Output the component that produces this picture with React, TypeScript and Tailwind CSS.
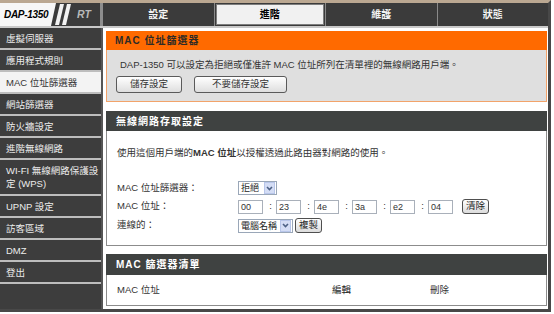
import React from 'react';

type MenuItem = { label: string | string[]; active?: boolean };

const menu: MenuItem[] = [
  { label: '虛擬伺服器' },
  { label: '應用程式規則' },
  { label: 'MAC 位址篩選器', active: true },
  { label: '網站篩選器' },
  { label: '防火牆設定' },
  { label: '進階無線網路' },
  { label: ['WI-FI 無線網路保護設', '定 (WPS)'] },
  { label: 'UPNP 設定' },
  { label: '訪客區域' },
  { label: 'DMZ' },
  { label: '登出' },
];

const tabs = [
  { label: '設定' },
  { label: '進階', active: true },
  { label: '維護' },
  { label: '狀態' },
];

const macParts = ['00', '23', '4e', '3a', 'e2', '04'];

const Chevron = () => (
  <svg width="7" height="5" viewBox="0 0 7 5">
    <path d="M1 1 L3.5 3.5 L6 1" fill="none" stroke="#4d6185" strokeWidth="1.6" />
  </svg>
);

const Select: React.FC<{ value: string; wide?: boolean }> = ({ value, wide }) => (
  <div className={`flex items-center h-[14px] border border-[#9aa7b8] bg-white ${wide ? 'w-[55px]' : 'w-[39px]'}`}>
    <span className="flex-1 pl-[2px] text-[9px] leading-[12px] text-[#222] whitespace-nowrap overflow-hidden">{value}</span>
    <span className="flex items-center justify-center shrink-0 w-[11px] h-[12px] mr-[1px] bg-[#d4ddf5] border border-[#b8c6ea]">
      <Chevron />
    </span>
  </div>
);

const SmallButton: React.FC<{ label: string }> = ({ label }) => (
  <div className="flex items-center justify-center h-[15px] px-[3px] border border-[#4f4f4f] rounded-[3px] bg-linear-to-b from-white to-[#dcdcdc] text-[9.5px] text-[#222] whitespace-nowrap">
    {label}
  </div>
);

const BigButton: React.FC<{ label: string; wide?: boolean }> = ({ label, wide }) => (
  <div
    className={`flex items-center justify-center h-[17px] border border-[#5a5a5a] rounded-[3px] bg-linear-to-b from-white to-[#dedede] text-[9.5px] text-[#333] ${wide ? 'w-[93px]' : 'w-[66px]'}`}
  >
    {label}
  </div>
);

export default function App() {
  return (
    <div className="w-[554px] h-[314px] bg-white overflow-hidden [font-family:'Liberation_Sans','Noto_Sans_CJK_TC',sans-serif]">
      <div className="w-[551px] h-[312px] flex flex-col border-t-[3px] border-t-[#bba892] border-r-[3px] border-r-[#484848] border-b-[3px] border-b-[#484848]">
        {/* header */}
        <div className="flex h-[25px] shrink-0 bg-[#3b3b3b] border-b-2 border-[#c9c9c9]">
          <div className="relative w-[100px] flex items-center">
            <svg className="absolute inset-0" width="100" height="23" viewBox="0 0 100 23">
              <polygon points="0,0 56,0 51,23 0,23" fill="#f7f7f7" />
              <polygon points="60,1 64,1 59,22 55,22" fill="#f2f2f2" />
              <polygon points="67,1 71,1 66,22 62,22" fill="#f2f2f2" />
            </svg>
            <span className="relative pl-[4px] italic font-bold text-[10px] tracking-[-0.3px] text-black">DAP-1350</span>
            <span className="absolute left-[77px] italic font-bold text-[10.5px] text-[#b8b8b8]">RT</span>
          </div>
          <div className="w-[3px] bg-[#8d8d8d]" />
          <div className="flex flex-1">
            {tabs.map((t, i) => (
              <div key={t.label} className={`flex-1 flex ${i > 0 ? 'border-l border-[#8a8a8a]' : ''}`}>
                {t.active ? (
                  <div className="flex-1 flex items-center justify-center my-[1px] mx-[1px] bg-[#f1f1f1] border border-[#7d7d7d] text-[10px] font-bold text-black">
                    {t.label}
                  </div>
                ) : (
                  <div className="flex-1 flex items-center justify-center text-[10px] font-bold text-[#f4f4f4]">{t.label}</div>
                )}
              </div>
            ))}
          </div>
        </div>

        {/* body */}
        <div className="flex flex-1">
          <div className="w-[101px] bg-[#3d3d3d]">
            {menu.map((m, i) => {
              const double = Array.isArray(m.label);
              return (
                <div
                  key={i}
                  className={`flex flex-col justify-center pl-[6px] border-b-2 border-[#bdbdbd] text-[9.5px] leading-[13px] whitespace-nowrap ${
                    m.active ? 'bg-[#f3f3f3] text-[#333]' : 'text-[#ececec]'
                  } ${double ? 'h-[36px]' : 'h-[22px]'}`}
                >
                  {double ? (m.label as string[]).map((l) => <span key={l}>{l}</span>) : <span>{m.label}</span>}
                </div>
              );
            })}
          </div>

          <div className="flex-1 flex flex-col border-l-2 border-[#555] pl-[3px] pr-[1px] pt-[3px] text-[9.5px] text-[#333]">
            {/* MAC filter intro */}
            <div className="flex flex-col">
              <div className="h-[19px] flex items-center bg-[#ff6a00] pl-[9px] text-[10px] font-bold tracking-[1px] text-[#2e2a26]">
                MAC 位址篩選器
              </div>
              <div className="h-[52px] bg-[#dfdfdf] border border-t-0 border-[#f2a36a] pl-[9px] pt-[9px]">
                <div className="ml-[4px] leading-[12px] text-[#333]">
                  DAP-1350 可以設定為拒絕或僅准許 MAC 位址所列在清單裡的無線網路用戶端。
                </div>
                <div className="flex gap-[12px] mt-[5px]">
                  <BigButton label="儲存設定" />
                  <BigButton label="不要儲存設定" wide />
                </div>
              </div>
            </div>

            {/* wireless access */}
            <div className="flex flex-col mt-[9px]">
              <div className="h-[20px] flex items-center bg-[#3f4241] pl-[10px] text-[10px] font-bold tracking-[1px] text-white">
                無線網路存取設定
              </div>
              <div className="h-[115px] border border-t-0 border-[#8c8c8c] pl-[10px] pt-[15px]">
                <div className="leading-[14px]">
                  使用這個用戶端的<span className="font-bold">MAC 位址</span>以授權透過此路由器對網路的使用。
                </div>
                <div className="flex flex-col mt-[19px]">
                  <div className="flex items-center h-[18px]">
                    <span className="w-[121px]">MAC 位址篩選器：</span>
                    <Select value="拒絕" />
                  </div>
                  <div className="flex items-center h-[19px]">
                    <span className="w-[121px]">MAC 位址：</span>
                    {macParts.map((p, i) => (
                      <React.Fragment key={i}>
                        {i > 0 && <span className="w-[13px] text-right pr-[4px]">:</span>}
                        <div className="w-[25px] h-[14px] border border-[#a9b0ba] bg-white pl-[2px] text-[9px] leading-[12px] text-[#333]">
                          {p}
                        </div>
                      </React.Fragment>
                    ))}
                    <div className="ml-[9px]">
                      <SmallButton label="清除" />
                    </div>
                  </div>
                  <div className="flex items-center h-[19px]">
                    <span className="w-[121px]">連線的：</span>
                    <Select value="電腦名稱" wide />
                    <div className="ml-[2px]">
                      <SmallButton label="複製" />
                    </div>
                  </div>
                </div>
              </div>
            </div>

            {/* filter list */}
            <div className="flex flex-col mt-[8px]">
              <div className="h-[21px] flex items-center bg-[#3f4241] pl-[10px] text-[10px] font-bold tracking-[1px] text-white">
                MAC 篩選器清單
              </div>
              <div className="h-[31px] flex items-center border border-t-0 border-[#8c8c8c] pl-[10px]">
                <span className="w-[215px]">MAC 位址</span>
                <span className="w-[98px] text-[#222]">編輯</span>
                <span>刪除</span>
              </div>
            </div>
          </div>
        </div>
      </div>
    </div>
  );
}
